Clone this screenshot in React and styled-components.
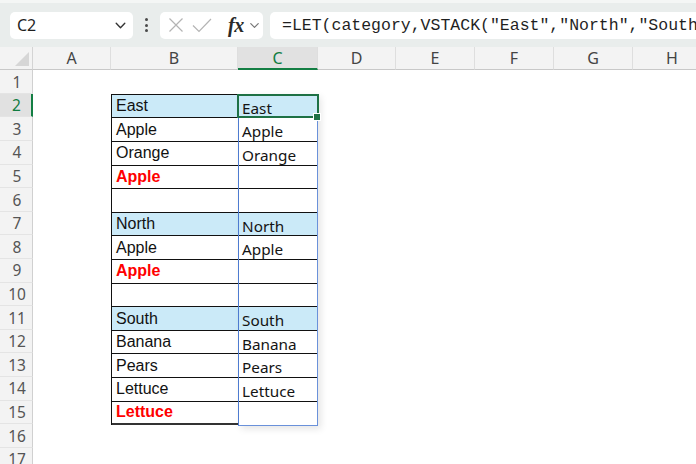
import React from "react";
import styled, { createGlobalStyle, css } from "styled-components";

const GlobalStyle = createGlobalStyle`
  html, body {
    margin: 0;
    padding: 0;
    background: #ffffff;
    overflow: hidden;
  }
  * {
    box-sizing: border-box;
  }
`;

const COLS = [
  { key: "A", width: 78 },
  { key: "B", width: 127 },
  { key: "C", width: 80, selected: true },
  { key: "D", width: 78 },
  { key: "E", width: 79 },
  { key: "F", width: 79 },
  { key: "G", width: 79 },
  { key: "H", width: 79 },
];

const ROW_H = 23.6;

const TABLE = [
  { b: "East", c: "East", head: true },
  { b: "Apple", c: "Apple" },
  { b: "Orange", c: "Orange" },
  { b: "Apple", red: true },
  { b: "" },
  { b: "North", c: "North", head: true },
  { b: "Apple", c: "Apple" },
  { b: "Apple", red: true },
  { b: "" },
  { b: "South", c: "South", head: true },
  { b: "Banana", c: "Banana" },
  { b: "Pears", c: "Pears" },
  { b: "Lettuce", c: "Lettuce" },
  { b: "Lettuce", red: true },
];

const Page = styled.div`
  width: 696px;
  height: 464px;
  overflow: hidden;
  background: #fff;
`;

const FormulaBar = styled.div`
  height: 47px;
  display: flex;
  align-items: center;
  padding: 0 0 0 10px;
  background: #e9edec;
  border-top: 3px solid #f4f6f5;
`;

const Box = styled.div`
  height: 27px;
  background: #fff;
  border-radius: 5px;
  display: flex;
  align-items: center;
  flex-shrink: 0;

  svg {
    flex-shrink: 0;
  }
`;

const NameBox = styled(Box)`
  width: 123px;
  padding: 0 5px 0 7px;
  justify-content: space-between;
  font-family: "Noto Sans", sans-serif;
  font-size: 16px;
  color: #1f1f1f;
`;

const Dots = styled.div`
  width: 27px;
  flex-shrink: 0;
  display: flex;
  flex-direction: column;
  align-items: center;
  gap: 2.5px;

  span {
    width: 3px;
    height: 3px;
    border-radius: 50%;
    background: #4a4a4a;
  }
`;

const FnBox = styled(Box)`
  width: 103px;
  padding: 0 0 0 8px;
  gap: 8px;
`;

const Fx = styled.span`
  font-family: "Liberation Serif", serif;
  font-style: italic;
  font-weight: bold;
  font-size: 20px;
  color: #2a2a2a;
  margin: 0 -4px 0 8px;
  letter-spacing: -0.5px;
  line-height: 1;
`;

const FormulaInput = styled(Box)`
  flex: 1 1 auto;
  min-width: 0;
  margin-left: 7px;
  padding-left: 12px;
  border-radius: 5px 0 0 5px;
  font-family: "Liberation Mono", monospace;
  font-size: 16.5px;
  color: #1f1f1f;
  white-space: nowrap;
  overflow: hidden;
`;

const Sheet = styled.div`
  display: grid;
  grid-template-columns: 33px ${COLS.map((c) => `${c.width}px`).join(" ")};
  grid-template-rows: 23.3px repeat(17, ${ROW_H}px);
  font-family: "Noto Sans", sans-serif;
`;

const Corner = styled.div`
  background: #f3f3f3;
  border-right: 1px solid #d4d4d4;
  border-bottom: 1px solid #c8c8c8;
  position: relative;

  &::after {
    content: "";
    position: absolute;
    right: 3px;
    bottom: 3px;
    border-left: 14px solid transparent;
    border-bottom: 14px solid #d6d6d6;
  }
`;

const ColHead = styled.div`
  display: flex;
  align-items: center;
  justify-content: center;
  font-size: 16px;
  color: #444;
  background: #f3f3f3;
  border-right: 1px solid #dedede;
  border-bottom: 1px solid #c8c8c8;
  ${(p) =>
    p.$selected &&
    css`
      background: #e1e1e1;
      color: #107c41;
      border-bottom: 2px solid #137e43;
    `}
`;

const RowHead = styled.div`
  display: flex;
  align-items: center;
  justify-content: center;
  padding-left: 2px;
  font-size: 15.5px;
  color: #555;
  background: #f3f3f3;
  border-right: 1px solid #d0d0d0;
  border-bottom: 1px solid #e4e4e4;
  ${(p) =>
    p.$selected &&
    css`
      background: #e1e1e1;
      color: #107c41;
      border-right: 2px solid #137e43;
    `}
`;

const Table = styled.div`
  grid-column: 3 / 5;
  grid-row: 3 / 17;
  display: flex;
  align-items: flex-start;
`;

const Column = styled.div`
  display: flex;
  flex-direction: column;
  border-top: 1px solid #111;
  ${(p) =>
    p.$spill
      ? css`
          width: 80px;
          border-left: 1px solid #4d7bd0;
          border-right: 1.5px solid #6a91da;
          border-bottom: 1px solid #6a91da;
          box-shadow: 3px 3px 7px rgba(0, 0, 0, 0.1);
        `
      : css`
          width: 127px;
          border-left: 1px solid #111;
        `}
`;

const Cell = styled.div`
  height: ${ROW_H}px;
  display: flex;
  align-items: center;
  padding-left: 4px;
  white-space: nowrap;
  color: #111;
  border-bottom: 1px solid #111;
  background: ${(p) => (p.$head ? "#cbeaf8" : "#fff")};
  font-family: "Liberation Sans", Arial, sans-serif;
  font-size: 16px;
  ${(p) =>
    p.$red &&
    css`
      color: #ff0000;
      font-weight: bold;
    `}
  ${(p) =>
    p.$last &&
    css`
      border-bottom: 2px solid #333;
    `}
`;

const SpillCell = styled(Cell)`
  font-family: "Noto Sans", sans-serif;
  font-size: 15.3px;
  padding-top: 3px;
  padding-left: 3px;
  color: #141414;
  ${(p) =>
    p.$last &&
    css`
      border-bottom: none;
    `}
  ${(p) =>
    p.$active &&
    css`
      position: relative;
      &::before {
        content: "";
        position: absolute;
        left: -2px;
        top: -1px;
        right: -2px;
        bottom: -1px;
        border: 2px solid #1e7145;
      }
      &::after {
        content: "";
        position: absolute;
        right: -4px;
        bottom: -4px;
        width: 6px;
        height: 6px;
        background: #1e7145;
        border: 1px solid #fff;
      }
    `}
`;

const Chevron = ({ size = 14, color = "#444" }) => (
  <svg width={size} height={size} viewBox="0 0 14 14" fill="none">
    <path d="M3 5l4 4 4-4" stroke={color} strokeWidth="1.3" strokeLinecap="round" strokeLinejoin="round" />
  </svg>
);

const CancelIcon = () => (
  <svg width="16" height="16" viewBox="0 0 16 16" fill="none">
    <path d="M1.5 1.5l13 13M14.5 1.5l-13 13" stroke="#b4b4b4" strokeWidth="1.2" />
  </svg>
);

const CheckIcon = () => (
  <svg width="20" height="16" viewBox="0 0 20 16" fill="none">
    <path d="M1 8.5l6 6L19 2" stroke="#b4b4b4" strokeWidth="1.2" />
  </svg>
);

export default function App() {
  const rows = Array.from({ length: 17 }, (_, i) => i + 1);
  return (
    <Page>
      <GlobalStyle />
      <FormulaBar>
        <NameBox>
          <span>C2</span>
          <Chevron size={15} color="#333" />
        </NameBox>
        <Dots>
          <span />
          <span />
          <span />
        </Dots>
        <FnBox>
          <CancelIcon />
          <CheckIcon />
          <Fx>fx</Fx>
          <Chevron size={13} color="#777" />
        </FnBox>
        <FormulaInput>=LET(category,VSTACK("East","North","South",</FormulaInput>
      </FormulaBar>
      <Sheet>
        <Corner />
        {COLS.map((c) => (
          <ColHead key={c.key} $selected={c.selected}>
            {c.key}
          </ColHead>
        ))}
        {rows.map((r) => (
          <RowHead key={r} style={{ gridRow: r + 1, gridColumn: 1 }} $selected={r === 2}>
            {r}
          </RowHead>
        ))}
        <Table>
          <Column>
            {TABLE.map((row, i) => (
              <Cell key={i} $head={row.head} $red={row.red} $last={i === TABLE.length - 1}>
                {row.b}
              </Cell>
            ))}
          </Column>
          <Column $spill>
            {TABLE.map((row, i) => (
              <SpillCell key={i} $head={row.head} $active={i === 0} $last={i === TABLE.length - 1}>
                {row.c || ""}
              </SpillCell>
            ))}
          </Column>
        </Table>
      </Sheet>
    </Page>
  );
}
